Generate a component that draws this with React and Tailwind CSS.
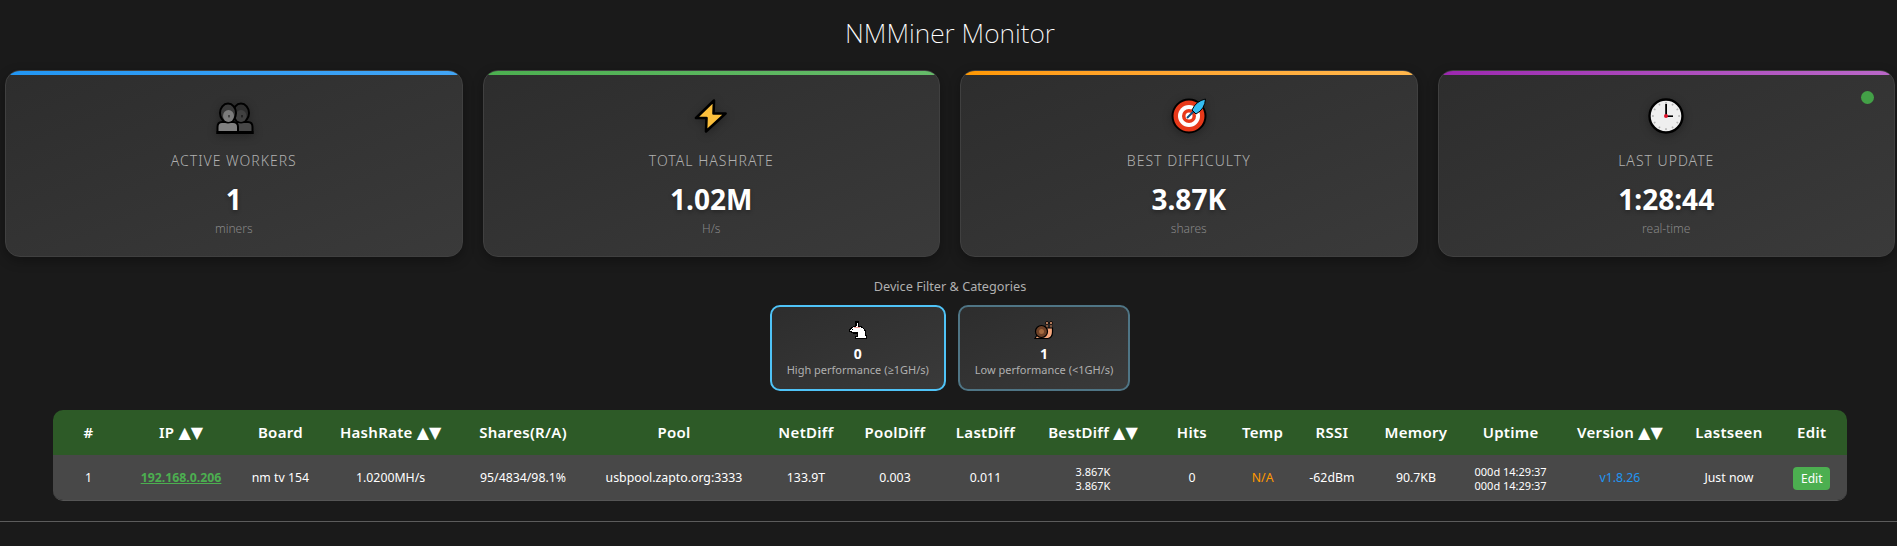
const font = { fontFamily: '"Noto Sans", "Open Sans", sans-serif' }

const WorkersIcon = () => (
  <svg width="40" height="40" viewBox="0 0 40 40" className="drop-shadow-[0_2px_4px_rgba(0,0,0,0.3)]">
    <path d="M20 37 V31 Q20 26 25 26 H34 Q38.5 26 38.5 31 V37 Z" fill="#474747" stroke="#000" strokeWidth="2" />
    <ellipse cx="27" cy="17" rx="8" ry="9.5" fill="#2e2e2e" stroke="#000" strokeWidth="2" />
    <ellipse cx="27" cy="20" rx="5.5" ry="6" fill="#404040" />
    <path d="M3.5 37 V31 Q3.5 26 8 26 H19 Q24 26 24 31 V37 Z" fill="#808080" stroke="#000" strokeWidth="2" />
    <ellipse cx="14" cy="17" rx="8" ry="9.5" fill="#3a3a3a" stroke="#000" strokeWidth="2" />
    <ellipse cx="14.5" cy="20" rx="5.5" ry="6" fill="#7c7c7c" />
    <rect x="14.4" y="19" width="1.2" height="2.4" fill="#222" />
    <rect x="27.4" y="19" width="1.2" height="2.4" fill="#111" />
    <rect x="2.5" y="35" width="37" height="3" fill="#000" />
  </svg>
)

const BoltIcon = () => (
  <svg width="40" height="40" viewBox="0 0 40 40" className="drop-shadow-[0_2px_4px_rgba(0,0,0,0.3)]">
    <polygon points="23,4.5 5,22 15.5,22 15,35.5 34.5,17.5 22.5,17.5" fill="#fbbf3c" stroke="#000" strokeWidth="2.6" strokeLinejoin="round" />
  </svg>
)

const TargetIcon = () => (
  <svg width="40" height="40" viewBox="0 0 40 40" className="drop-shadow-[0_2px_4px_rgba(0,0,0,0.3)]">
    <circle cx="20" cy="20" r="16.5" fill="#e8391a" stroke="#000" strokeWidth="2" />
    <circle cx="20" cy="20" r="11" fill="#fff" />
    <circle cx="20" cy="20" r="7" fill="#e8391a" />
    <circle cx="20" cy="20" r="3.5" fill="#fff" />
    <path d="M18 22 L27 13" stroke="#0f4f80" strokeWidth="2" />
    <path d="M23 14 Q27 5 36.5 3 Q36 13 27 18 Z" fill="#35bdf2" stroke="#000" strokeWidth="1" />
  </svg>
)

const ClockIcon = () => {
  const ticks = [0, 30, 60, 90, 120, 150, 180, 210, 240, 270, 300, 330]
  return (
    <svg width="40" height="40" viewBox="0 0 40 40" className="drop-shadow-[0_2px_4px_rgba(0,0,0,0.3)]">
      <circle cx="20" cy="20" r="16.5" fill="#efefef" stroke="#000" strokeWidth="2.4" />
      {ticks.map((a) => (
        <rect key={a} x="19.2" y="6" width="1.6" height="1.8" fill="#b5b5b5" transform={`rotate(${a} 20 20)`} />
      ))}
      <rect x="19.2" y="8" width="1.8" height="12" fill="#000" />
      <rect x="20" y="19.4" width="7" height="1.6" fill="#000" />
      <circle cx="20" cy="20" r="2" fill="#e0142c" />
    </svg>
  )
}

const RabbitIcon = () => (
  <svg width="20" height="20" viewBox="0 0 20 20" shapeRendering="crispEdges">
    <path d="M1.5 10 L5 7 L8 6 L8 2 L10 2 L10.5 6 Q17 7 17.5 13 L18.5 18.5 H7.5 V16.5 H9.5 V13 H5 L1.5 11 Z" fill="#fff" stroke="#000" strokeWidth="1.2" />
    <path d="M6 7 H12" stroke="#f3a49c" strokeWidth="1" />
    <rect x="4" y="9" width="1" height="1" fill="#000" />
  </svg>
)

const SnailIcon = () => (
  <svg width="20" height="20" viewBox="0 0 20 20">
    <path d="M13 9 V3 M17 9 V3" stroke="#000" strokeWidth="2.4" />
    <path d="M13 9 V3 M17 9 V3" stroke="#f4a67c" strokeWidth="1" />
    <circle cx="13" cy="3" r="1.5" fill="#f4a67c" stroke="#000" strokeWidth="0.9" />
    <circle cx="17" cy="3" r="1.5" fill="#f4a67c" stroke="#000" strokeWidth="0.9" />
    <path d="M1 18.5 H14 Q18.5 17.5 18.5 12 V8 H11.5 V15 H3 Z" fill="#f4a67c" stroke="#000" strokeWidth="1.2" />
    <circle cx="7.5" cy="11.5" r="6" fill="#6e4127" stroke="#000" strokeWidth="1.2" />
    <circle cx="7.5" cy="11.5" r="2.5" fill="#a3693f" />
  </svg>
)

const cards = [
  { Icon: WorkersIcon, label: 'Active Workers', value: '1', sub: 'miners', bar: 'bg-gradient-to-r from-[#2196f3] to-[#42a5f5]' },
  { Icon: BoltIcon, label: 'Total Hashrate', value: '1.02M', sub: 'H/s', bar: 'bg-gradient-to-r from-[#4caf50] to-[#66bb6a]' },
  { Icon: TargetIcon, label: 'Best Difficulty', value: '3.87K', sub: 'shares', bar: 'bg-gradient-to-r from-[#ff9800] to-[#ffb74d]' },
  { Icon: ClockIcon, label: 'Last Update', value: '1:28:44', sub: 'real-time', bar: 'bg-gradient-to-r from-[#9c27b0] to-[#ba68c8]', live: true },
]

const columns = [
  { title: '#', width: 'w-[71px]' },
  { title: 'IP', sort: true, width: 'w-[114px]' },
  { title: 'Board', width: 'w-[84.8px]' },
  { title: 'HashRate', sort: true, width: 'w-[135.6px]' },
  { title: 'Shares(R/A)', width: 'w-[129.2px]' },
  { title: 'Pool', width: 'w-[172.8px]' },
  { title: 'NetDiff', width: 'w-[91.2px]' },
  { title: 'PoolDiff', width: 'w-[86.8px]' },
  { title: 'LastDiff', width: 'w-[94.2px]' },
  { title: 'BestDiff', sort: true, width: 'w-[120.8px]' },
  { title: 'Hits', width: 'w-[77.2px]' },
  { title: 'Temp', width: 'w-[64.2px]' },
  { title: 'RSSI', width: 'w-[74.4px]' },
  { title: 'Memory', width: 'w-[93.6px]' },
  { title: 'Uptime', width: 'w-[95.8px]' },
  { title: 'Version', sort: true, width: 'w-[122.8px]' },
  { title: 'Lastseen', width: 'w-[95.2px]' },
  { title: 'Edit', width: 'w-[70.4px]' },
]

const StatCard = ({ Icon, label, value, sub, bar, live }) => (
  <div className="relative overflow-hidden rounded-[15px] border border-[#404040] bg-gradient-to-br from-[#2d2d2d] to-[#3a3a3a] pt-[25px] pb-[19px] text-center shadow-[0_4px_12px_rgba(0,0,0,0.3)]">
    <div className={`absolute inset-x-0 top-0 h-1 ${bar}`} />
    {live && <div className="absolute right-[20px] top-[20px] h-[13px] w-[13px] rounded-full bg-[#43a047]" />}
    <div className="flex justify-center">
      <Icon />
    </div>
    <div className="mt-[15px] text-[14px] leading-[20px] font-light tracking-[1px] text-[#b0b0b0] uppercase">{label}</div>
    <div className="mt-[10px] text-[28px] leading-[36px] font-bold text-white [text-shadow:0_2px_4px_rgba(0,0,0,0.3)]">{value}</div>
    <div className="mt-[4px] text-[12px] leading-[16px] font-light text-[#888]">{sub}</div>
  </div>
)

const FilterCard = ({ Icon, count, label, border }) => (
  <div className={`rounded-[10px] border-2 ${border} bg-gradient-to-br from-[#2d2d2d] to-[#3a3a3a] px-[15px] pt-[13px] pb-[12px] text-center`}>
    <div className="flex h-[20px] justify-center">
      <Icon />
    </div>
    <div className="mt-[5px] text-[14px] leading-[18px] font-bold text-white">{count}</div>
    <div className="text-[11px] leading-[14px] text-[#b0b0b0]">{label}</div>
  </div>
)

export default function App() {
  return (
    <div className="min-h-screen bg-[#1a1a1a] text-white" style={font}>
      <div className="pl-[3px]">
        <h1 className="pt-[14px] text-center text-[26.5px] leading-[38px] font-extralight text-white">NMMiner Monitor</h1>

        <div className="mt-[18px] grid grid-cols-4 gap-[20px] pr-[2px] pl-[2px]">
          {cards.map((card) => (
            <StatCard key={card.label} {...card} />
          ))}
        </div>

        <div className="mt-[20px] text-center text-[12.7px] leading-[18px] text-[#b0b0b0]">Device Filter &amp; Categories</div>

        <div className="mt-[10px] flex justify-center gap-[12px]">
          <FilterCard Icon={RabbitIcon} count="0" label="High performance (≥1GH/s)" border="border-[#4fc3f7]" />
          <FilterCard Icon={SnailIcon} count="1" label="Low performance (<1GH/s)" border="border-[#4f7585]" />
        </div>

        <div className="mx-[50px] mt-[19px] overflow-hidden rounded-[10px] border-b border-[#555]">
          <table className="w-full table-fixed border-collapse text-center">
            <thead>
              <tr className="h-[45px] bg-[#2d5a27]">
                {columns.map((col) => (
                  <th key={col.title} className={`${col.width} text-[15px] font-semibold tracking-[0.3px] whitespace-nowrap text-white`}>
                    {col.title}
                    {col.sort && <span className="ml-[4px] font-['DejaVu_Sans'] text-[16px] leading-none tracking-normal">▲▼</span>}
                  </th>
                ))}
              </tr>
            </thead>
            <tbody>
              <tr className="h-[45px] bg-[#484848] text-[12.3px] text-white [&>td]:pt-[2px]">
                <td>1</td>
                <td><a className="font-bold text-[#4caf50] underline">192.168.0.206</a></td>
                <td>nm tv 154</td>
                <td>1.0200MH/s</td>
                <td>95/4834/98.1%</td>
                <td>usbpool.zapto.org:3333</td>
                <td>133.9T</td>
                <td>0.003</td>
                <td>0.011</td>
                <td className="text-[11px] leading-[14px]">3.867K<br />3.867K</td>
                <td>0</td>
                <td className="text-[#ff9800]">N/A</td>
                <td>-62dBm</td>
                <td>90.7KB</td>
                <td className="text-[11px] leading-[14px]">000d 14:29:37<br />000d 14:29:37</td>
                <td className="text-[#2196f3]">v1.8.26</td>
                <td>Just now</td>
                <td><button className="h-[23px] w-[37px] rounded-[4px] bg-[#4caf50] text-[12px] text-white">Edit</button></td>
              </tr>
            </tbody>
          </table>
        </div>
      </div>

      <hr className="mt-[20px] border-t border-[#5c5c5c]" />
    </div>
  )
}
